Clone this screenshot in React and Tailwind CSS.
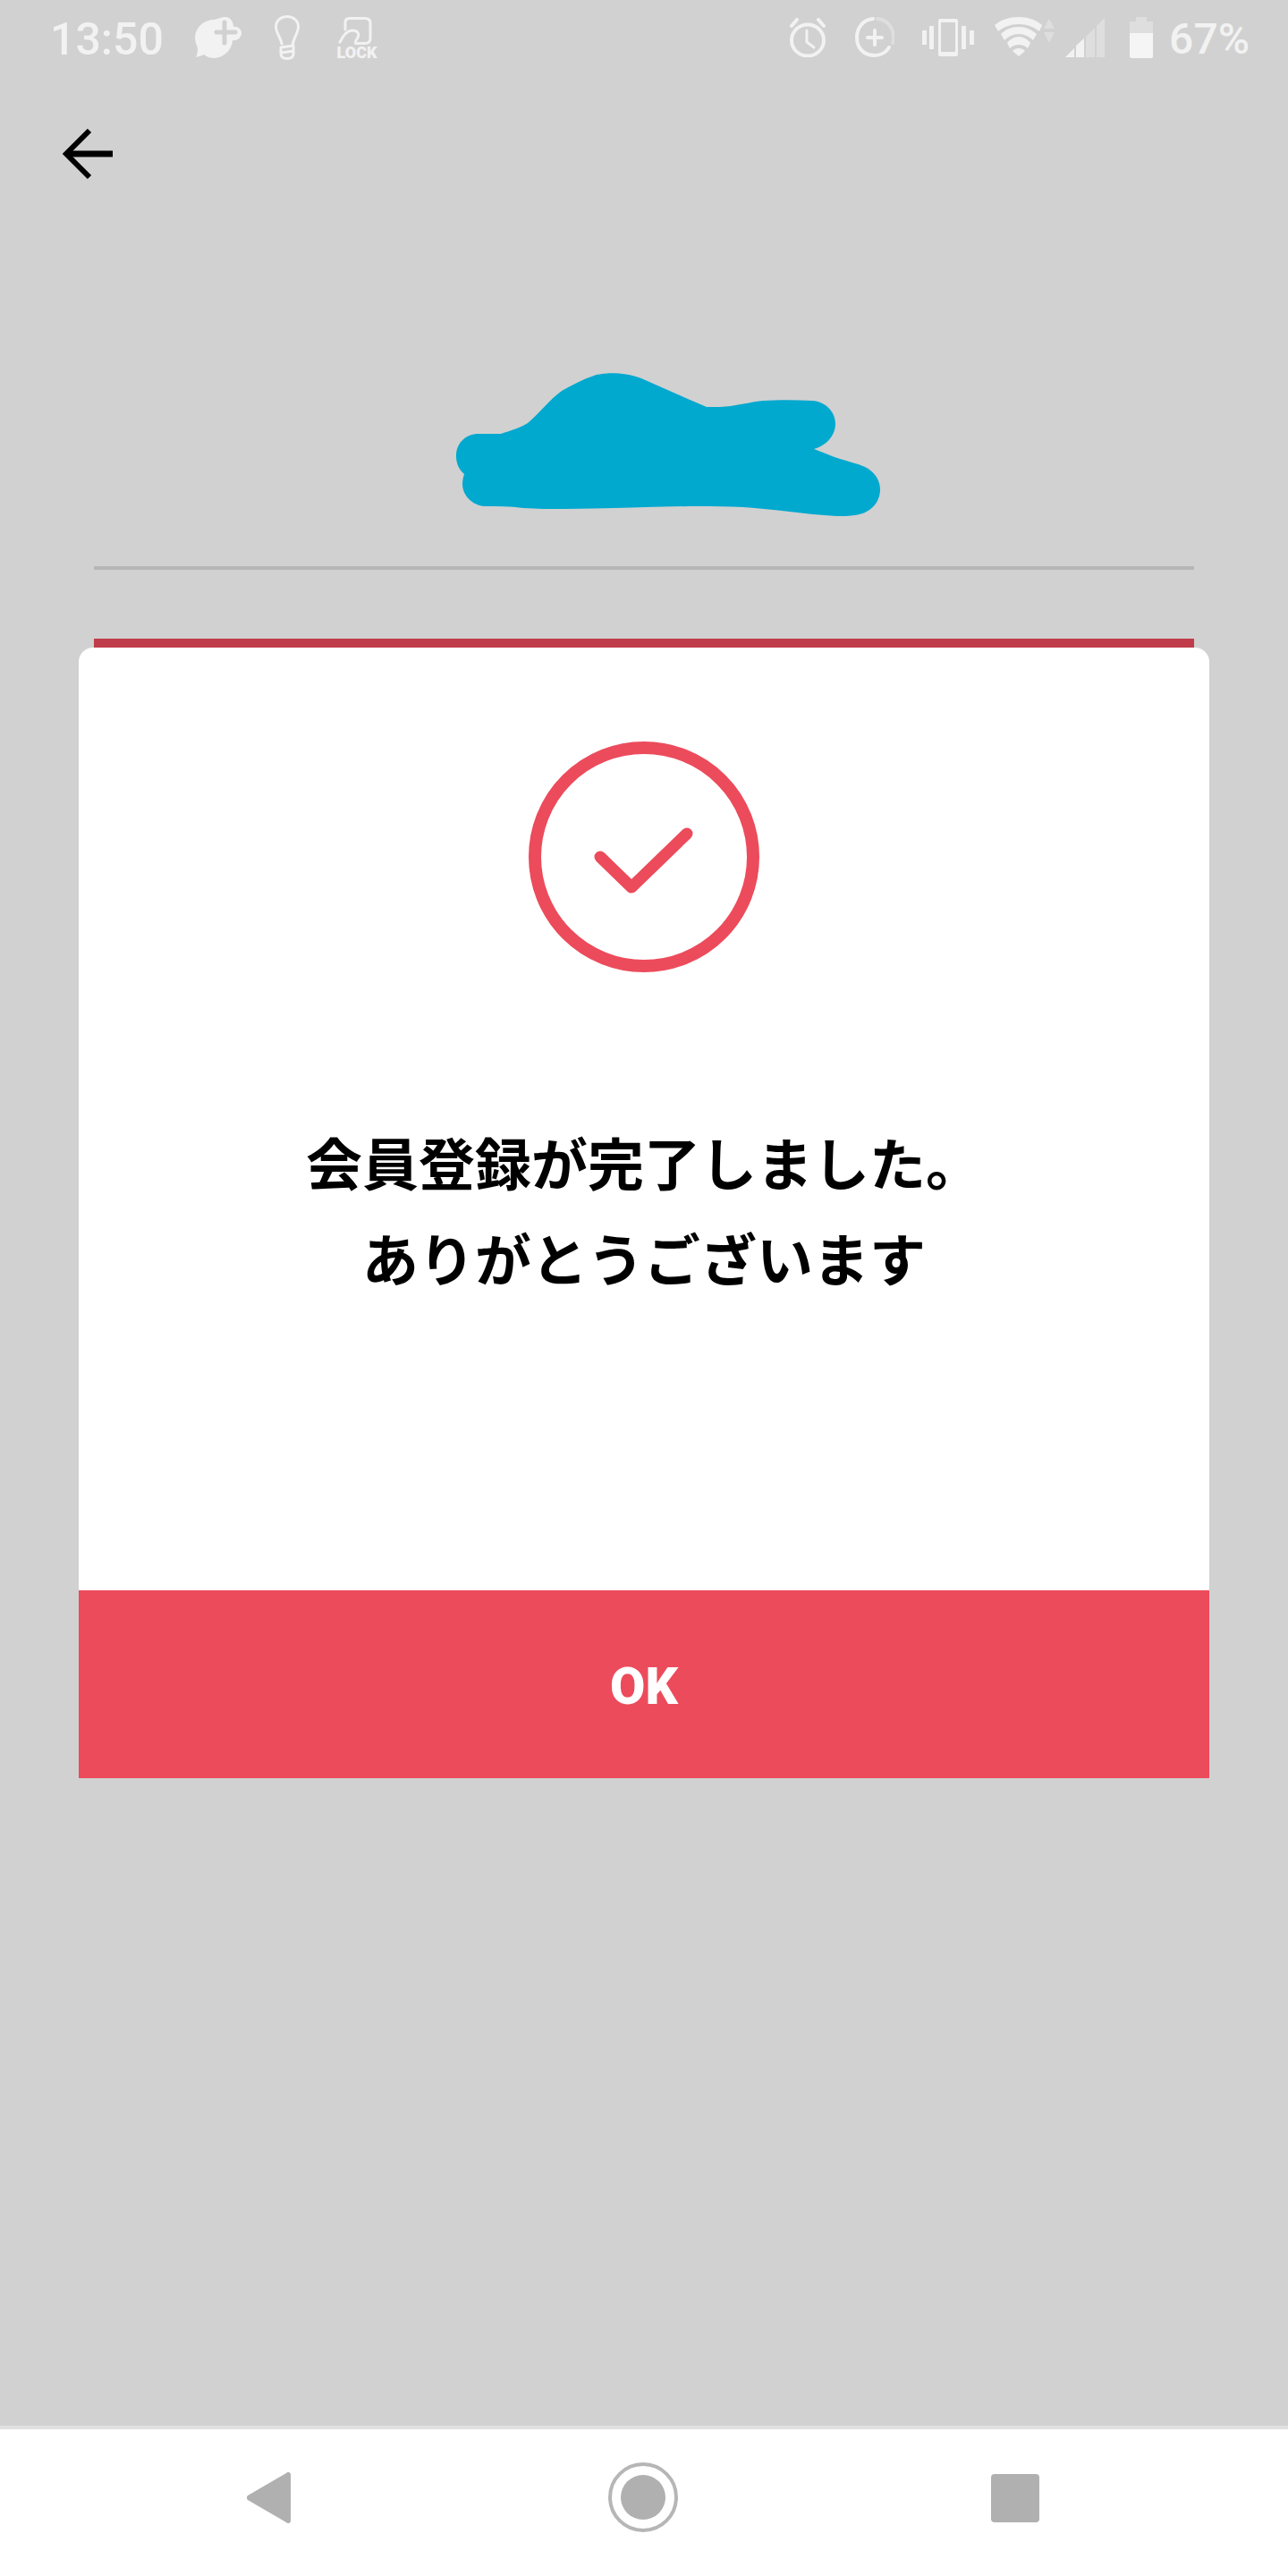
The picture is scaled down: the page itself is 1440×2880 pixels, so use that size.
import React from "react";

const BubbleIcon = () => (
  <svg className="w-[52px] h-[46px] mt-[19px] ml-[39px]" viewBox="0 0 52 46">
    <path d="M22 3C10 3 1 11 0 22C0 28 2 32 3 35C3 39 2 43 1 45C5 44 8 43 10 42C14 45 18 46 22 46C33 45 41 37 42 26C47 27 52 23 52 18C52 13 47 10 43 11C43 5 39 0 34 0C29 0 26 2 22 3Z" fill="#f2f2f2" />
    <path d="M33 6V29M24 17H45" stroke="#d1d1d1" strokeWidth="5" strokeLinecap="round" />
  </svg>
);

const BulbIcon = () => (
  <svg className="w-[28px] h-[50px] mt-[17px] ml-[37px]" viewBox="0 0 28 50" fill="none" stroke="#f2f2f2" strokeWidth="3" strokeLinecap="round">
    <path d="M8 32C7 25 1.500 20 1.500 13C1.500 6 7 1.500 14 1.500C21 1.500 26.500 6 26.500 13C26.500 20 21 25 20 34" />
    <path d="M7 36L21 34M7 42L21 40M7 36V43C7 47 10 48.500 14 48.500C18 48.500 21 47 21 43V35" />
  </svg>
);

const LockIcon = () => (
  <div className="w-[46px] h-[48px] mt-[19px] ml-[41px] flex flex-col items-center">
    <svg className="w-[42px] h-[31px] shrink-0" viewBox="0 0 42 31" fill="none" stroke="#f2f2f2" strokeWidth="3" strokeLinecap="round">
      <path d="M8 14V6C8 3 10 1.500 13 1.500H30C34 1.500 36 3 36 7V24C36 28 34 29.500 30 29.500H22" />
      <path d="M2 28C6 20 11 15 16 15C22 15 24 19 22 23C20 26 18 28 20 30" />
    </svg>
    <span className="font-['Roboto',sans-serif] font-black text-[18px] leading-[17px] text-[#f2f2f2]">LOCK</span>
  </div>
);

const AlarmIcon = () => (
  <svg className="w-[42px] h-[44px] mt-[20px]" viewBox="0 0 42 44" fill="none" stroke="#f2f2f2" strokeLinecap="round">
    <ellipse cx="21" cy="25" rx="18" ry="17.500" strokeWidth="4" />
    <path d="M3 9L9 2M39 9L33 2" strokeWidth="4" />
    <path d="M20 14V27L28 33" strokeWidth="3" />
  </svg>
);

const DataSaverIcon = () => (
  <svg className="w-[44px] h-[45px] mt-[19px] ml-[32px]" viewBox="0 0 44 45" fill="none" strokeLinecap="round">
    <path d="M20 2C9 3 2 12 2 23C2 35 10 43 22 43C29 43 35 39 38 34" stroke="#f2f2f2" strokeWidth="4" />
    <path d="M25 2C36 3 43 12 43 23C43 25 43 27 42 29" stroke="#dedede" strokeWidth="4" />
    <path d="M22 15V31M14 23H30" stroke="#f2f2f2" strokeWidth="4" />
  </svg>
);

const VibrateIcon = () => (
  <svg className="w-[58px] h-[42px] mt-[21px] ml-[31px]" viewBox="0 0 58 42" fill="#f2f2f2">
    <path fillRule="evenodd" d="M18 2C18 1 19 0 20 0H38C39 0 40 1 40 2V40C40 41 39 42 38 42H20C19 42 18 41 18 40ZM21 4V37H37V4Z" />
    <rect x="0" y="13" width="5" height="16" />
    <rect x="8" y="8" width="5" height="26" />
    <rect x="44" y="8" width="5" height="26" />
    <rect x="53" y="13" width="5" height="16" />
  </svg>
);

const WifiIcon = () => (
  <svg className="w-[68px] h-[44px] mt-[19px] ml-[23px]" viewBox="0 0 68 44" fill="#f2f2f2">
    <path d="M0 9C7 3 17 0 27 0C37 0 46 3 53 9L50 16C44 11 36 8 27 8C18 8 10 11 4 16Z" />
    <path d="M7 19C12 14 19 11 27 11C35 11 41 14 47 19L43 26C39 22 33 19 27 19C21 19 15 22 11 26Z" />
    <path d="M14 29C17 25 22 22 27 22C32 22 37 25 40 29L37 35C34 32 31 31 27 31C23 31 20 32 17 35Z" />
    <path d="M20 38C22 36 24 35 27 35C30 35 32 36 34 38L27 44Z" />
    <path d="M61 2L67 13H55Z M55 17H67L61 29Z" fill="#dedede" />
  </svg>
);

const SignalIcon = () => (
  <svg className="w-[45px] h-[44px] mt-[20px] ml-[11px]" viewBox="0 0 45 44">
    <path d="M0 44L10 34V44Z" fill="#f2f2f2" />
    <path d="M12 31L21 23V44H12Z" fill="#f2f2f2" />
    <path d="M23 21L33 11V44H23Z" fill="#dedede" />
    <path d="M35 9L44 0V44H35Z" fill="#dedede" />
  </svg>
);

const BatteryIcon = () => (
  <svg className="w-[26px] h-[46px] mt-[19px] ml-[27px]" viewBox="0 0 26 46">
    <path d="M7 0H19V5H26V18H0V5H7Z" fill="#dedede" />
    <path d="M0 18H26V44C26 45 25 46 24 46H2C1 46 0 45 0 44Z" fill="#f5f5f5" />
  </svg>
);

const App = () => {
  return (
    <div className="w-[1440px] h-[2880px] bg-[#d1d1d1] flex flex-col font-['Roboto',sans-serif] overflow-hidden">
      <div className="h-[100px] shrink-0 flex items-start pl-[56px] pr-[43px]">
        <span className="w-[123px] text-[50px] leading-[56px] mt-[16px] font-medium text-[#f2f2f2]">13:50</span>
        <BubbleIcon />
        <BulbIcon />
        <LockIcon />
        <div className="ml-auto flex items-start">
          <AlarmIcon />
          <DataSaverIcon />
          <VibrateIcon />
          <WifiIcon />
          <SignalIcon />
          <BatteryIcon />
          <span className="text-[48px] leading-[56px] mt-[16px] ml-[18px] font-medium text-[#f2f2f2]">67%</span>
        </div>
      </div>

      <div className="pl-[70px] mt-[44px]">
        <svg className="block w-[56px] h-[56px]" viewBox="0 0 56 56" fill="none" stroke="#000000" strokeWidth="7">
          <path d="M56 28H4" />
          <path d="M30 2L4 28L30 54" strokeWidth="6" />
        </svg>
      </div>

      <div className="pl-[510px] mt-[217px]">
        <svg className="block w-[474px] h-[160px]" viewBox="510 417 474 160">
          <path
            fill="#02a9cf"
            d="M510 510C510 495 521 485 535 485L560 485C572 481 582 478 590 473C603 462 614 447 628 437C640 430 652 424 664 420C674 417 695 415 717 423C742 434 766 445 790 455C800 455 810 455 817 454C830 452 842 449 853 448C870 447 890 447 908 448C923 449 934 460 934 474C934 488 922 499 910 502C920 506 930 510 939 513C948 516 958 518 967 522C977 527 984 536 984 547C984 563 972 574 956 576C950 577 942 577 935 577C900 575 865 569 831 567C815 566 798 566 781 566C730 566 680 569 631 569C615 569 600 569 585 568C570 566 555 566 542 566C528 565 517 554 517 541C517 537 518 533 519 530C513 525 510 518 510 510Z"
          />
        </svg>
      </div>

      <div className="h-[4px] mx-[105px] mt-[56px] bg-[#b6b6b6] shrink-0" />
      <div className="h-[10px] mx-[105px] mt-[77px] bg-[#c13c4a] shrink-0" />

      <div className="mx-[88px] h-[1264px] shrink-0 bg-white rounded-t-[16px] flex flex-col overflow-hidden">
        <div className="flex-1 flex flex-col items-center pt-[105px]">
          <svg className="block w-[258px] h-[258px]" viewBox="0 0 258 258" fill="none" stroke="#ec4b5b">
            <circle cx="129" cy="129" r="122" strokeWidth="14" />
            <path d="M80 129L115 163L177 103" strokeWidth="13" strokeLinecap="round" strokeLinejoin="round" />
          </svg>
          <p className="mt-[157px] text-center text-black font-bold text-[63px] leading-[107px] font-['Noto_Sans_CJK_JP',sans-serif]">
            会員登録が完了しました。
            <br />
            ありがとうございます
          </p>
        </div>
        <div className="h-[210px] shrink-0 bg-[#ec4b5b] flex items-center justify-center pt-[4px]">
          <span className="text-white font-black text-[57px] leading-none">OK</span>
        </div>
      </div>

      <div className="mt-auto shrink-0 h-[4px] bg-[#e0e0e0]" />
      <div className="h-[164px] shrink-0 bg-white flex items-start pl-[276px]">
        <svg className="w-[49px] h-[57px] mt-[48px]" viewBox="0 0 49 57" fill="#b0b0b0">
          <path d="M49 3V54C49 57 46 58 44 56L1 31C-0.500 30 -0.500 27 1 26L44 1C46 -1 49 0 49 3Z" />
        </svg>
        <div className="w-[78px] h-[78px] mt-[37px] ml-[355px] rounded-full border-[4px] border-[#b6b6b6] flex items-center justify-center">
          <div className="w-[50px] h-[50px] rounded-full bg-[#b0b0b0]" />
        </div>
        <div className="w-[54px] h-[54px] mt-[50px] ml-[350px] rounded-[4px] bg-[#b0b0b0]" />
      </div>
    </div>
  );
};

export default App;
